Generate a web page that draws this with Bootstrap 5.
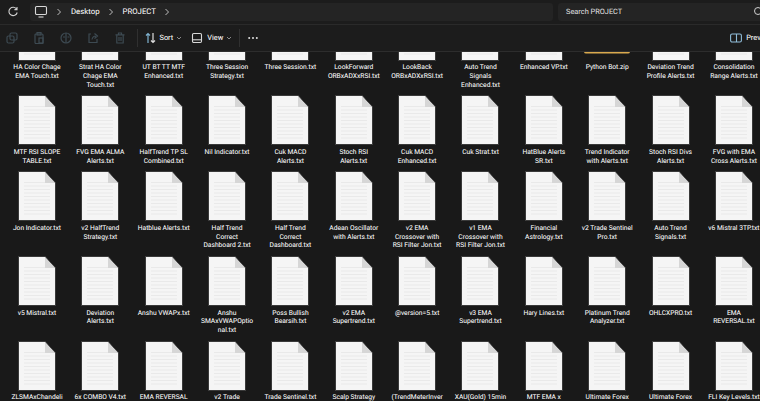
<!DOCTYPE html>
<html lang="en" data-bs-theme="dark">
<head>
  <meta charset="UTF-8" />
  <title>PROJECT - File Explorer</title>
  <link rel="stylesheet" href="https://cdn.jsdelivr.net/npm/bootstrap@5.3.0/dist/css/bootstrap.min.css" />
  <style>
    html, body { height: 401px; overflow: hidden; }
    body { background: #191919; color: #e8e8e8; font-family: Roboto, "Noto Sans", sans-serif; font-size: 6.7px; text-rendering: geometricPrecision; text-shadow: 0 0 .6px rgba(255, 255, 255, .45); }
    .fx-top { height: 25px; background: #1c1c1c; border-bottom: 1px solid #2a2a2a; padding: 3px 0 3px 7px; flex-shrink: 0; }
    .fx-address { width: 523px; margin-left: 11px; height: 18px; background: #242424; border-radius: 3px; padding-left: 4px; font-size: 7.8px; flex-shrink: 0; }
    .fx-crumb { margin-left: 8px; }
    .fx-crumb-text { margin-left: 9px; }
    .fx-search { width: 202px; margin-left: 5px; height: 18px; background: #242424; border-radius: 3px 0 0 3px; padding: 0 0 0 8px; font-size: 7.4px; color: #c8c8c8; flex-shrink: 0; }
    .fx-lens { margin-right: -5px; }
    .fx-tools { height: 27px; background: #1c1c1c; border-bottom: 1px solid #2d2d2d; font-size: 7.4px; flex-shrink: 0; }
    .fx-tool { width: 27px; display: flex; justify-content: center; flex-shrink: 0; }
    .fx-tool:first-child { margin-left: -1.5px; }
    .fx-sep { width: 1px; height: 18px; background: #303030; }
    .fx-sep-a { margin-left: 3px; }
    .fx-sort-icon { margin-left: 7px; }
    .fx-tool-text { margin-left: 4px; }
    .fx-caret { margin-left: 3px; }
    .fx-view-icon { margin-left: 9px; }
    .fx-sep-b { margin-left: 7px; }
    .fx-dots { margin-left: 8px; }
    .fx-preview { margin-right: -12px; }
    .fx-main { flex: 1 1 auto; overflow: hidden; }
    .fx-grid { display: grid; grid-template-columns: repeat(12, 63.36px); row-gap: 6.8px; padding-left: 5.3px; margin-top: -40.5px; }
    .fx-tile { display: flex; flex-direction: column; align-items: center; text-align: center; white-space: nowrap; line-height: 8.8px; }
    .fx-name { margin-top: 3.6px; }
    .fx-doc { width: 38px; height: 50px; margin: -1px 0; }
    .fx-zip { width: 48px; height: 50px; margin: -1px 0; }
    svg { display: block; flex-shrink: 0; }
  </style>
</head>
<body class="d-flex flex-column">
  <svg width="0" height="0" class="position-absolute">
    <symbol id="ficon" viewBox="0 0 38 50">
      <path d="M.5.5H27L37.5 12V49.5H.5Z" fill="#f5f5f5" stroke="#3a3a3a" />
      <path d="M6 11.5H32M6 15H32M6 18.5H32M6 22H32M6 25.5H32M6 29H32M6 32.5H32M6 36H32M6 39.5H32M6 43H32" stroke="#e6e6e6" stroke-width=".8" />
      <path d="M27 1V12H37Z" fill="#d6d6d6" />
    </symbol>
    <symbol id="ficon-zip" viewBox="0 0 48 50">
      <rect x="1" y="2" width="46" height="40.5" rx="2" fill="#d9a94f" />
    </symbol>
  </svg>

  <div class="fx-top d-flex align-items-center">
    <svg width="12" height="12" viewBox="0 0 12 12" fill="none" stroke="#cfcfcf" stroke-width="1.1"><path d="M9.7 3.2A4.2 4.2 0 1 0 10.2 6.5M10 1V3.6H7.4" /></svg>
    <div class="fx-address d-flex align-items-center">
      <svg width="14" height="14" viewBox="0 0 14 14" fill="none" stroke="#d8d8d8" stroke-width="1.1"><rect x="1.5" y="1.5" width="11" height="8" rx="1.2" /><path d="M4.5 12H9.5" /></svg>
      <svg class="fx-crumb" width="6" height="8" viewBox="0 0 6 8" fill="none" stroke="#bdbdbd"><path d="M1.5 1L4.5 4L1.5 7" /></svg>
      <span class="fx-crumb-text">Desktop</span>
      <svg class="fx-crumb" width="6" height="8" viewBox="0 0 6 8" fill="none" stroke="#bdbdbd"><path d="M1.5 1L4.5 4L1.5 7" /></svg>
      <span class="fx-crumb-text">PROJECT</span>
      <svg class="fx-crumb" width="6" height="8" viewBox="0 0 6 8" fill="none" stroke="#bdbdbd"><path d="M1.5 1L4.5 4L1.5 7" /></svg>
    </div>
    <div class="fx-search d-flex align-items-center justify-content-between">
      <span>Search PROJECT</span>
      <svg class="fx-lens" width="12" height="12" viewBox="0 0 12 12" fill="none" stroke="#cfcfcf"><circle cx="5" cy="5" r="3.5" /></svg>
    </div>
  </div>

  <div class="fx-tools d-flex align-items-center">
    <span class="fx-tool"><svg width="12" height="12" viewBox="0 0 12 12" fill="none" stroke="#3d4a52" stroke-width="1.2"><rect x="4" y="1" width="7" height="7" rx="1.5" /><rect x="1" y="4" width="7" height="7" rx="1.5" /></svg></span>
    <span class="fx-tool"><svg width="12" height="12" viewBox="0 0 12 12" fill="none" stroke="#3d4a52" stroke-width="1.2"><rect x="2" y="2" width="8" height="9.5" rx="1" /><rect x="4" y=".6" width="4" height="2.4" /><rect x="6" y="6" width="4" height="5" /></svg></span>
    <span class="fx-tool"><svg width="12" height="12" viewBox="0 0 12 12" fill="none" stroke="#3d4a52" stroke-width="1.2"><circle cx="6" cy="6" r="5" /><path d="M6 1V11M3 5H5M7.5 5H9.5" /></svg></span>
    <span class="fx-tool"><svg width="12" height="12" viewBox="0 0 12 12" fill="none" stroke="#3d4a52" stroke-width="1.2"><path d="M4 2H2V10.5H10V7" /><path d="M5 7.5C5.5 5 7 4 9 4M7.5 1.5L10.5 4L7.5 6.5" /></svg></span>
    <span class="fx-tool"><svg width="12" height="12" viewBox="0 0 12 12" fill="none" stroke="#3d4a52" stroke-width="1.2"><path d="M1.5 2.8H10.5M4.5 2.5V1H7.5V2.5M2.8 3V11H9.2V3M5 5V9M7 5V9" /></svg></span>
    <span class="fx-sep fx-sep-a"></span>
    <svg class="fx-sort-icon" width="11" height="12" viewBox="0 0 11 12" fill="none" stroke-width="1.2"><path d="M3 11V1.5M1 3.5L3 1.5L5 3.5" stroke="#7fb2cf" /><path d="M8 1V10.5M6 8.5L8 10.5L10 8.5" stroke="#dcdcdc" /></svg>
    <span class="fx-tool-text">Sort</span>
    <svg class="fx-caret" width="6" height="6" viewBox="0 0 6 6" fill="none" stroke="#a8a8a8" stroke-width=".8"><path d="M1 2L3 4L5 2" /></svg>
    <svg class="fx-view-icon" width="12" height="12" viewBox="0 0 12 12" fill="none" stroke="#d8d8d8" stroke-width="1.1"><rect x="1.5" y="1.5" width="9" height="9" rx="1.2" /><path d="M1.5 7.8H10.5" /></svg>
    <span class="fx-tool-text">View</span>
    <svg class="fx-caret" width="6" height="6" viewBox="0 0 6 6" fill="none" stroke="#a8a8a8" stroke-width=".8"><path d="M1 2L3 4L5 2" /></svg>
    <span class="fx-sep fx-sep-b"></span>
    <svg class="fx-dots" width="10" height="4" viewBox="0 0 10 4" fill="#e0e0e0"><circle cx="1.2" cy="2" r="1" /><circle cx="5" cy="2" r="1" /><circle cx="8.8" cy="2" r="1" /></svg>
    <div class="d-flex align-items-center ms-auto flex-shrink-0 fx-preview">
      <svg width="12" height="10" viewBox="0 0 12 10" fill="none" stroke="#8fbcd8" stroke-width="1.1"><rect x=".6" y="1" width="10.8" height="8" rx="1.5" /><path d="M6.5 1V9" /></svg>
      <span class="fx-tool-text">Preview</span>
    </div>
  </div>

  <div class="fx-main">
    <div class="fx-grid">
      <div class="fx-tile"><svg class="fx-doc"><use href="#ficon" /></svg><div class="fx-name">HA Color Chage<br>EMA Touch.txt</div></div>
      <div class="fx-tile"><svg class="fx-doc"><use href="#ficon" /></svg><div class="fx-name">Strat HA Color<br>Chage EMA<br>Touch.txt</div></div>
      <div class="fx-tile"><svg class="fx-doc"><use href="#ficon" /></svg><div class="fx-name">UT BT TT MTF<br>Enhanced.txt</div></div>
      <div class="fx-tile"><svg class="fx-doc"><use href="#ficon" /></svg><div class="fx-name">Three Session<br>Strategy.txt</div></div>
      <div class="fx-tile"><svg class="fx-doc"><use href="#ficon" /></svg><div class="fx-name">Three Session.txt</div></div>
      <div class="fx-tile"><svg class="fx-doc"><use href="#ficon" /></svg><div class="fx-name">LookForward<br>ORBxADXxRSI.txt</div></div>
      <div class="fx-tile"><svg class="fx-doc"><use href="#ficon" /></svg><div class="fx-name">LookBack<br>ORBxADXxRSI.txt</div></div>
      <div class="fx-tile"><svg class="fx-doc"><use href="#ficon" /></svg><div class="fx-name">Auto Trend<br>Signals<br>Enhanced.txt</div></div>
      <div class="fx-tile"><svg class="fx-doc"><use href="#ficon" /></svg><div class="fx-name">Enhanced VP.txt</div></div>
      <div class="fx-tile"><svg class="fx-zip"><use href="#ficon-zip" /></svg><div class="fx-name">Python Bot.zip</div></div>
      <div class="fx-tile"><svg class="fx-doc"><use href="#ficon" /></svg><div class="fx-name">Deviation Trend<br>Profile Alerts.txt</div></div>
      <div class="fx-tile"><svg class="fx-doc"><use href="#ficon" /></svg><div class="fx-name">Consolidation<br>Range Alerts.txt</div></div>

      <div class="fx-tile"><svg class="fx-doc"><use href="#ficon" /></svg><div class="fx-name">MTF RSI SLOPE<br>TABLE.txt</div></div>
      <div class="fx-tile"><svg class="fx-doc"><use href="#ficon" /></svg><div class="fx-name">FVG EMA ALMA<br>Alerts.txt</div></div>
      <div class="fx-tile"><svg class="fx-doc"><use href="#ficon" /></svg><div class="fx-name">HalfTrend TP SL<br>Combined.txt</div></div>
      <div class="fx-tile"><svg class="fx-doc"><use href="#ficon" /></svg><div class="fx-name">Nil Indicator.txt</div></div>
      <div class="fx-tile"><svg class="fx-doc"><use href="#ficon" /></svg><div class="fx-name">Cuk MACD<br>Alerts.txt</div></div>
      <div class="fx-tile"><svg class="fx-doc"><use href="#ficon" /></svg><div class="fx-name">Stoch RSI<br>Alerts.txt</div></div>
      <div class="fx-tile"><svg class="fx-doc"><use href="#ficon" /></svg><div class="fx-name">Cuk MACD<br>Enhanced.txt</div></div>
      <div class="fx-tile"><svg class="fx-doc"><use href="#ficon" /></svg><div class="fx-name">Cuk Strat.txt</div></div>
      <div class="fx-tile"><svg class="fx-doc"><use href="#ficon" /></svg><div class="fx-name">HatBlue Alerts<br>SR.txt</div></div>
      <div class="fx-tile"><svg class="fx-doc"><use href="#ficon" /></svg><div class="fx-name">Trend Indicator<br>with Alerts.txt</div></div>
      <div class="fx-tile"><svg class="fx-doc"><use href="#ficon" /></svg><div class="fx-name">Stoch RSI Divs<br>Alerts.txt</div></div>
      <div class="fx-tile"><svg class="fx-doc"><use href="#ficon" /></svg><div class="fx-name">FVG with EMA<br>Cross Alerts.txt</div></div>

      <div class="fx-tile"><svg class="fx-doc"><use href="#ficon" /></svg><div class="fx-name">Jon Indicator.txt</div></div>
      <div class="fx-tile"><svg class="fx-doc"><use href="#ficon" /></svg><div class="fx-name">v2 HalfTrend<br>Strategy.txt</div></div>
      <div class="fx-tile"><svg class="fx-doc"><use href="#ficon" /></svg><div class="fx-name">Hatblue Alerts.txt</div></div>
      <div class="fx-tile"><svg class="fx-doc"><use href="#ficon" /></svg><div class="fx-name">Half Trend<br>Correct<br>Dashboard 2.txt</div></div>
      <div class="fx-tile"><svg class="fx-doc"><use href="#ficon" /></svg><div class="fx-name">Half Trend<br>Correct<br>Dashboard.txt</div></div>
      <div class="fx-tile"><svg class="fx-doc"><use href="#ficon" /></svg><div class="fx-name">Adean Oscillator<br>with Alerts.txt</div></div>
      <div class="fx-tile"><svg class="fx-doc"><use href="#ficon" /></svg><div class="fx-name">v2 EMA<br>Crossover with<br>RSI Filter Jon.txt</div></div>
      <div class="fx-tile"><svg class="fx-doc"><use href="#ficon" /></svg><div class="fx-name">v1 EMA<br>Crossover with<br>RSI Filter Jon.txt</div></div>
      <div class="fx-tile"><svg class="fx-doc"><use href="#ficon" /></svg><div class="fx-name">Financial<br>Astrology.txt</div></div>
      <div class="fx-tile"><svg class="fx-doc"><use href="#ficon" /></svg><div class="fx-name">v2 Trade Sentinel<br>Pro.txt</div></div>
      <div class="fx-tile"><svg class="fx-doc"><use href="#ficon" /></svg><div class="fx-name">Auto Trend<br>Signals.txt</div></div>
      <div class="fx-tile"><svg class="fx-doc"><use href="#ficon" /></svg><div class="fx-name">v6 Mistral 3TP.txt</div></div>

      <div class="fx-tile"><svg class="fx-doc"><use href="#ficon" /></svg><div class="fx-name">v5 Mistral.txt</div></div>
      <div class="fx-tile"><svg class="fx-doc"><use href="#ficon" /></svg><div class="fx-name">Deviation<br>Alerts.txt</div></div>
      <div class="fx-tile"><svg class="fx-doc"><use href="#ficon" /></svg><div class="fx-name">Anshu VWAPx.txt</div></div>
      <div class="fx-tile"><svg class="fx-doc"><use href="#ficon" /></svg><div class="fx-name">Anshu<br>SMAxVWAPOptio<br>nal.txt</div></div>
      <div class="fx-tile"><svg class="fx-doc"><use href="#ficon" /></svg><div class="fx-name">Poss Bullish<br>Bearsih.txt</div></div>
      <div class="fx-tile"><svg class="fx-doc"><use href="#ficon" /></svg><div class="fx-name">v2 EMA<br>Supertrend.txt</div></div>
      <div class="fx-tile"><svg class="fx-doc"><use href="#ficon" /></svg><div class="fx-name">@version=5.txt</div></div>
      <div class="fx-tile"><svg class="fx-doc"><use href="#ficon" /></svg><div class="fx-name">v3 EMA<br>Supertrend.txt</div></div>
      <div class="fx-tile"><svg class="fx-doc"><use href="#ficon" /></svg><div class="fx-name">Hary Lines.txt</div></div>
      <div class="fx-tile"><svg class="fx-doc"><use href="#ficon" /></svg><div class="fx-name">Platinum Trend<br>Analyzer.txt</div></div>
      <div class="fx-tile"><svg class="fx-doc"><use href="#ficon" /></svg><div class="fx-name">OHLCXPRO.txt</div></div>
      <div class="fx-tile"><svg class="fx-doc"><use href="#ficon" /></svg><div class="fx-name">EMA<br>REVERSAL.txt</div></div>

      <div class="fx-tile"><svg class="fx-doc"><use href="#ficon" /></svg><div class="fx-name">ZLSMAxChandeli</div></div>
      <div class="fx-tile"><svg class="fx-doc"><use href="#ficon" /></svg><div class="fx-name">6x COMBO V4.txt</div></div>
      <div class="fx-tile"><svg class="fx-doc"><use href="#ficon" /></svg><div class="fx-name">EMA REVERSAL</div></div>
      <div class="fx-tile"><svg class="fx-doc"><use href="#ficon" /></svg><div class="fx-name">v2 Trade</div></div>
      <div class="fx-tile"><svg class="fx-doc"><use href="#ficon" /></svg><div class="fx-name">Trade Sentinel.txt</div></div>
      <div class="fx-tile"><svg class="fx-doc"><use href="#ficon" /></svg><div class="fx-name">Scalp Strategy</div></div>
      <div class="fx-tile"><svg class="fx-doc"><use href="#ficon" /></svg><div class="fx-name">(TrendMeterInver</div></div>
      <div class="fx-tile"><svg class="fx-doc"><use href="#ficon" /></svg><div class="fx-name">XAU(Gold) 15min</div></div>
      <div class="fx-tile"><svg class="fx-doc"><use href="#ficon" /></svg><div class="fx-name">MTF EMA x</div></div>
      <div class="fx-tile"><svg class="fx-doc"><use href="#ficon" /></svg><div class="fx-name">Ultimate Forex</div></div>
      <div class="fx-tile"><svg class="fx-doc"><use href="#ficon" /></svg><div class="fx-name">Ultimate Forex</div></div>
      <div class="fx-tile"><svg class="fx-doc"><use href="#ficon" /></svg><div class="fx-name">FLI Key Levels.txt</div></div>
    </div>
  </div>
  <script src="https://cdn.jsdelivr.net/npm/bootstrap@5.3.0/dist/js/bootstrap.bundle.min.js"></script>
</body>
</html>
